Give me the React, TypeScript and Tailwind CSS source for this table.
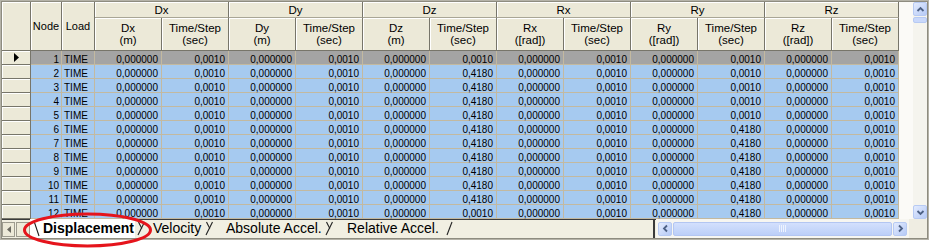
import React from 'react';

const V = '0,000000';
const T = '0,0010';
const H = '0,4180';

type Row = { n: number; dz: string; ry: string };
const rows: Row[] = Array.from({ length: 12 }, (_, i) => {
  const n = i + 1;
  return { n, dz: n >= 2 && n <= 11 ? H : T, ry: n >= 6 ? H : T };
});

const groups = [
  { g: 'Dx', u: '(m)' },
  { g: 'Dy', u: '(m)' },
  { g: 'Dz', u: '(m)' },
  { g: 'Rx', u: '([rad])' },
  { g: 'Ry', u: '([rad])' },
  { g: 'Rz', u: '([rad])' },
];

function Chevron({ dir }: { dir: 'up' | 'down' | 'left' | 'right' }) {
  const pts =
    dir === 'up'
      ? '2.5,7 5.5,4 8.5,7'
      : dir === 'down'
      ? '2.5,4 5.5,7 8.5,4'
      : dir === 'left'
      ? '7,2.5 4,5.5 7,8.5'
      : '4,2.5 7,5.5 4,8.5';
  return (
    <svg width="11" height="11" viewBox="0 0 11 11">
      <polyline points={pts} fill="none" stroke="#4D6185" strokeWidth="1.8" />
    </svg>
  );
}

function SBtn({ dir }: { dir: 'up' | 'down' | 'left' | 'right' }) {
  return (
    <div className="w-[14px] h-[14px] shrink-0 rounded-[2px] border border-[#B7CAF3] bg-linear-to-br from-[#E3EBFE] to-[#B6CAF6] flex items-center justify-center">
      <Chevron dir={dir} />
    </div>
  );
}

function Sep() {
  return (
    <svg width="16" height="17" viewBox="0 0 16 17" className="shrink-0">
      <line x1="3" y1="15" x2="9.5" y2="2" stroke="#222" strokeWidth="1.1" />
      <line x1="3.5" y1="2" x2="6.8" y2="8.5" stroke="#222" strokeWidth="1.1" />
    </svg>
  );
}

export default function App() {
  return (
    <div className="relative w-[932px] h-[248px] bg-white overflow-hidden font-['Liberation_Sans',Arial,sans-serif] text-black">
      <div className="w-[929px] h-[240px] border border-[#B5B3A8]">
        <div className="w-full h-full border border-[#8E8C80] flex flex-col bg-[#F8F7F3]">
          {/* top: grid + vscroll */}
          <div className="flex h-[217px] overflow-hidden">
            <div className="w-[897px] shrink-0 flex flex-col">
              {/* header */}
              <div className="flex h-[49px] text-[11px] leading-[12px]">
                <div className="w-[29px] h-full bg-[#ECE9D8] border-r border-b border-[#77756A] shadow-[inset_1px_1px_0_#fff]" />
                <div className="w-[31px] h-full bg-[#ECE9D8] border-r border-b border-[#77756A] shadow-[inset_1px_1px_0_#fff] flex items-center justify-center">
                  Node
                </div>
                <div className="w-[33px] h-full bg-[#ECE9D8] border-r border-b border-[#77756A] shadow-[inset_1px_1px_0_#fff] flex items-center justify-center">
                  Load
                </div>
                {groups.map((gr) => (
                  <div key={gr.g} className="w-[134px] h-full flex flex-col text-[11.5px]">
                    <div className="h-[16px] bg-[#ECE9D8] border-r border-b border-r-[#77756A] border-b-[#A9A696] shadow-[inset_1px_1px_0_#fff] flex items-center justify-center">
                      {gr.g}
                    </div>
                    <div className="flex h-[33px]">
                      <div className="w-[67px] h-full bg-[#ECE9D8] border-r border-b border-[#77756A] shadow-[inset_1px_1px_0_#fff] flex flex-col items-center justify-center">
                        <span>{gr.g}</span>
                        <span>{gr.u}</span>
                      </div>
                      <div className="w-[67px] h-full bg-[#ECE9D8] border-r border-b border-[#77756A] shadow-[inset_1px_1px_0_#fff] flex flex-col items-center justify-center">
                        <span>Time/Step</span>
                        <span>(sec)</span>
                      </div>
                    </div>
                  </div>
                ))}
              </div>
              {/* rows */}
              {rows.map((r) => {
                const vals = [V, T, V, T, V, r.dz, V, T, V, r.ry, V, T];
                const bg = r.n === 1 ? 'bg-[#A4A4A4]' : 'bg-[#A6CAF0]';
                return (
                  <div key={r.n} className="flex h-[14px] shrink-0 text-[10px] leading-[11px]">
                    <div className="w-[29px] h-full bg-[#ECE9D8] border-r border-b border-[#77756A] shadow-[inset_1px_1px_0_#fff] flex items-center justify-center pl-[2px]">
                      {r.n === 1 && (
                        <svg width="6" height="9" viewBox="0 0 6 9">
                          <polygon points="0,0 5,4.5 0,9" fill="#000" />
                        </svg>
                      )}
                    </div>
                    <div className={`flex ${bg}`}>
                      <div className="w-[31px] h-full border-r border-b border-[#C3B9A0] text-right pr-[2px] pt-[3px]">
                        {r.n}
                      </div>
                      <div className="w-[33px] h-full border-r border-b border-[#C3B9A0] pl-[2px] pt-[3px]">
                        TIME
                      </div>
                      {vals.map((v, i) => (
                        <div
                          key={i}
                          className="w-[67px] h-full border-r border-b border-[#C3B9A0] text-right pr-[3px] pt-[3px]"
                        >
                          {v}
                        </div>
                      ))}
                    </div>
                  </div>
                );
              })}
            </div>
            <div className="w-[14px] shrink-0 bg-[#FBFAF7]" />
            {/* vertical scrollbar */}
            <div className="w-[14px] shrink-0 flex flex-col bg-[#F5F4EE]">
              <SBtn dir="up" />
              <div className="mt-[1px] h-[6px] rounded-[2px] border border-[#B7CAF3] bg-[#C9D8FB]" />
              <div className="flex-1" />
              <SBtn dir="down" />
            </div>
          </div>
          {/* bottom: tabs + hscroll */}
          <div className="flex h-[19px] shrink-0">
            <div className="w-[651px] shrink-0 flex items-stretch bg-[#F1EFE2] border-t border-[#3C3C3C] text-[14px] leading-[17px]">
              <div className="flex items-center gap-[1px]">
                <div className="w-[13px] h-[15px] border border-[#9D9B8F] bg-[#ECE9D8] flex items-center justify-center">
                  <svg width="4" height="7" viewBox="0 0 4 7">
                    <polygon points="4,0 0,3.5 4,7" fill="#6B6A62" />
                  </svg>
                </div>
                <div className="w-[14px] h-[15px] border border-[#9D9B8F] bg-[#ECE9D8]" />
              </div>
              <div className="flex items-stretch bg-white -mt-[1px]">
                <svg width="12" height="18" viewBox="0 0 12 18" className="shrink-0">
                  <line x1="4" y1="2" x2="9" y2="17" stroke="#222" strokeWidth="1.1" />
                </svg>
                <span className="w-[93px] pl-[1px] font-bold leading-[19px]">Displacement</span>
              </div>
              <Sep />
              <span className="w-[52px] pl-[2px]">Velocity</span>
              <Sep />
              <span className="w-[104px] pl-[7px] whitespace-nowrap">Absolute Accel.</span>
              <Sep />
              <span className="w-[104px] pl-[8px] whitespace-nowrap">Relative Accel.</span>
              <svg width="12" height="17" viewBox="0 0 12 17" className="shrink-0">
                <line x1="4" y1="15" x2="9" y2="2" stroke="#222" strokeWidth="1.1" />
              </svg>
              <div className="flex-1" />
            </div>
            <div className="w-[3px] shrink-0 bg-[#F1EFE2] border-l-2 border-[#3A3A3A] border-t border-t-[#3C3C3C]" />
            <div className="w-[253px] shrink-0 flex items-center gap-[1px] px-[2px] bg-[#F7F6F1]">
              <SBtn dir="left" />
              <div className="flex-1 h-[14px] rounded-[2px] border border-[#B3C6F2] bg-linear-to-b from-[#D3E0FD] to-[#BCCFF8] flex items-center justify-center">
                <div className="flex gap-[1px]">
                  <div className="w-[1px] h-[7px] bg-[#EEF3FE]" />
                  <div className="w-[1px] h-[7px] bg-[#EEF3FE]" />
                  <div className="w-[1px] h-[7px] bg-[#EEF3FE]" />
                  <div className="w-[1px] h-[7px] bg-[#EEF3FE]" />
                </div>
              </div>
              <SBtn dir="right" />
            </div>
            <div className="flex-1 bg-[#EFEDE2]" />
          </div>
        </div>
      </div>
      <svg
        className="absolute left-0 top-0 pointer-events-none"
        width="932"
        height="248"
        viewBox="0 0 932 248"
      >
        <ellipse cx="87.5" cy="230" rx="63" ry="16" fill="none" stroke="#E5141C" strokeWidth="3" />
      </svg>
    </div>
  );
}
